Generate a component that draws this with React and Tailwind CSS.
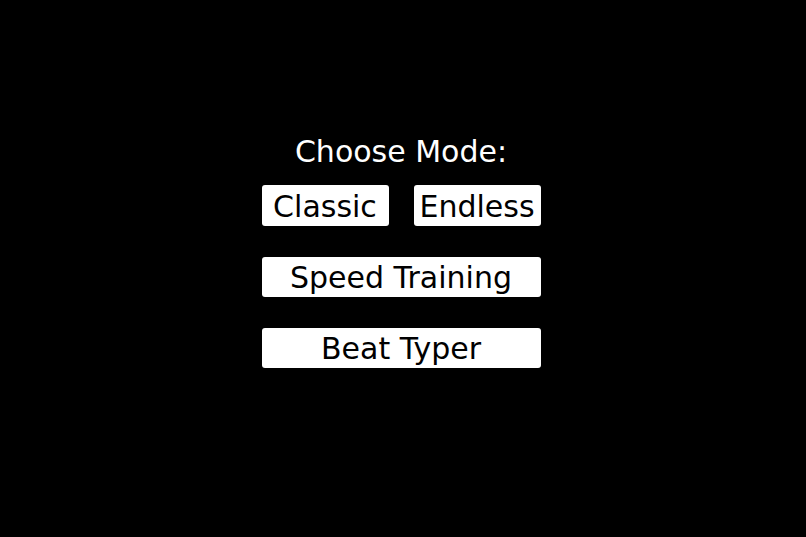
export default function App() {
  const font = { fontFamily: '"DejaVu Sans", "Liberation Sans", sans-serif' };
  const btn =
    'flex items-center justify-center rounded-[3px] bg-white pt-[2px] text-[30px] leading-none text-black';

  return (
    <div className="flex h-[537px] w-full flex-col items-center bg-black pr-[4px] pt-[133px]" style={font}>
      <h1 className="text-[30px] leading-[38px] text-white">Choose Mode:</h1>
      <div className="mt-[14px] flex w-[279px] flex-col gap-[31px]">
        <div className="flex justify-between">
          <button className={`${btn} h-[41px] w-[127px]`}>Classic</button>
          <button className={`${btn} h-[41px] w-[127px]`}>Endless</button>
        </div>
        <button className={`${btn} h-[40px] w-full`}>Speed Training</button>
        <button className={`${btn} h-[40px] w-full`}>Beat Typer</button>
      </div>
    </div>
  );
}
